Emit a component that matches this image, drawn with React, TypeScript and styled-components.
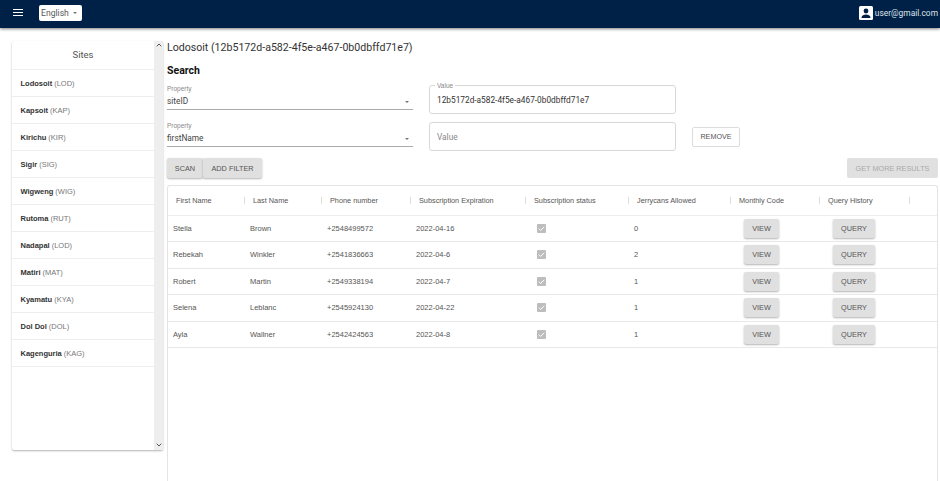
import { styled, createGlobalStyle } from "styled-components";

const GlobalStyle = createGlobalStyle`
  html, body {
    margin: 0;
    height: 100%;
    background: #fff;
    overflow: hidden;
    font-family: Roboto, "Liberation Sans", sans-serif;
  }
  * { box-sizing: border-box; }
`;

const arial = `"Liberation Sans", Arial, sans-serif`;

const Page = styled.div`
  width: 940px;
  height: 481px;
  display: flex;
  flex-direction: column;
  overflow: hidden;
`;

const Header = styled.header`
  height: 28px;
  flex: none;
  background: #002147;
  box-shadow: 0 1px 3px rgba(0, 0, 0, 0.5);
  display: flex;
  align-items: center;
  padding: 0 2px 3px 13px;
  position: relative;
  z-index: 2;
`;

const Menu = styled.svg`
  width: 10px;
  height: 7px;
  margin-right: 16px;
`;

const LangSelect = styled.div`
  width: 43px;
  height: 16px;
  background: #fff;
  border-radius: 2px;
  display: flex;
  align-items: center;
  justify-content: space-between;
  padding: 0 5px 0 2px;
  font-size: 8.6px;
  color: #555;
`;

const Caret = styled.div`
  width: 0;
  height: 0;
  border-left: 2.5px solid transparent;
  border-right: 2.5px solid transparent;
  border-top: 2.5px solid #757575;
`;

const UserBox = styled.div`
  margin-left: auto;
  display: flex;
  align-items: center;
  gap: 2px;
  color: #dfe3e9;
  font-size: 8.4px;
`;

const Avatar = styled.svg`
  width: 14px;
  height: 14px;
`;

const Body = styled.div`
  flex: 1;
  min-height: 0;
  display: flex;
  padding: 13px 2px 0 12px;
  gap: 4px;
`;

const SidebarCard = styled.aside`
  width: 151px;
  height: 409px;
  flex: none;
  display: flex;
  border-radius: 2px;
  box-shadow: 0 1px 2px rgba(0, 0, 0, 0.3);
`;

const SiteList = styled.div`
  flex: 1;
  min-width: 0;
`;

const SitesTitle = styled.div`
  height: 29px;
  padding-bottom: 1px;
  display: flex;
  align-items: center;
  justify-content: center;
  font-size: 9.5px;
  color: #555;
  border-bottom: 1px solid #eee;
`;

const SiteRow = styled.div`
  height: 27px;
  display: flex;
  align-items: center;
  gap: 2px;
  padding-left: 8.5px;
  font-family: ${arial};
  font-size: 7.5px;
  border-bottom: 1px solid #eee;

  b {
    font-weight: 700;
    color: #333;
  }

  span {
    color: #777;
  }
`;

const Scrollbar = styled.div`
  width: 9px;
  background: #eee;
  display: flex;
  flex-direction: column;
  justify-content: space-between;
  align-items: center;
  padding: 2px 0 3px;
`;

const ScrollArrow = styled.svg`
  width: 6px;
  height: 4px;
`;

const Main = styled.main`
  flex: 1;
  min-width: 0;
  display: flex;
  flex-direction: column;
`;

const Title = styled.div`
  font-size: 10.6px;
  line-height: 14px;
  color: #333;
  margin-bottom: 10px;
`;

const SearchHead = styled.div`
  font-size: 10.5px;
  line-height: 12px;
  font-weight: 700;
  color: #111;
  margin-bottom: 8px;
`;

const FilterRow = styled.div`
  display: flex;
  align-items: center;
  margin-bottom: 8px;
  height: 29px;
`;

const PropertyField = styled.div`
  width: 246px;
  height: 25px;
  margin-right: 16px;
  border-bottom: 1px solid #aaa;
  color: #444;
  display: flex;
  flex-direction: column;
  align-self: flex-start;
  position: relative;

  small {
    font-family: ${arial};
    font-size: 6.5px;
    line-height: 8px;
    color: #888;
  }

  span {
    font-size: 8.3px;
    line-height: 13px;
    margin-top: 2px;
  }
`;

const FieldCaret = styled.div`
  position: absolute;
  right: 4px;
  bottom: 6px;
`;

const ValueField = styled.div<{ $empty?: boolean }>`
  width: 247px;
  height: 29px;
  border: 1px solid #d8d8d8;
  border-radius: 3px;
  padding-left: 7px;
  display: flex;
  align-items: center;
  font-size: 8.3px;
  color: ${(p) => (p.$empty ? "#888" : "#333")};
  position: relative;

  small {
    position: absolute;
    top: -4px;
    left: 5px;
    padding: 0 2px;
    background: #fff;
    font-family: ${arial};
    font-size: 6.5px;
    line-height: 7px;
    color: #888;
  }
`;

const RemoveButton = styled.div`
  width: 48px;
  height: 20px;
  margin-left: 16px;
  border: 1px solid #ddd;
  border-radius: 2px;
  display: flex;
  align-items: center;
  justify-content: center;
  font-family: ${arial};
  font-size: 7.2px;
  color: #555;
`;

const Actions = styled.div`
  display: flex;
  height: 20px;
  margin-top: -1px;
  margin-bottom: 7px;
`;

const GreyButton = styled.div<{ $w: number; $disabled?: boolean }>`
  width: ${(p) => p.$w}px;
  height: 20px;
  flex: none;
  background: #e0e0e0;
  border-radius: 2px;
  display: flex;
  align-items: center;
  justify-content: center;
  font-family: ${arial};
  font-size: 7.3px;
  color: ${(p) => (p.$disabled ? "#aaa" : "#555")};
  box-shadow: ${(p) => (p.$disabled ? "none" : "0 1px 2px rgba(0, 0, 0, 0.3)")};
  margin-left: ${(p) => (p.$disabled ? "auto" : "0")};
`;

const TableCard = styled.div`
  flex: 1;
  border: 1px solid #e4e4e4;
  border-bottom: none;
  border-radius: 3px 3px 0 0;
  min-height: 0;
  font-family: ${arial};
`;

const columns = "77px 77px 89px 115px 103px 102px 89px 90px 1fr";

const HeadRow = styled.div`
  display: grid;
  grid-template-columns: ${columns};
  height: 29.5px;
  align-items: center;
  border-bottom: 1px solid #eee;
  font-size: 7.3px;
  color: #555;
`;

const HeadCell = styled.div`
  padding-left: 8px;
  position: relative;

  &::after {
    content: "";
    position: absolute;
    right: 0;
    top: 1px;
    height: 7px;
    width: 1px;
    background: #ddd;
  }

  &:last-child::after {
    display: none;
  }
`;

const Row = styled.div`
  display: grid;
  grid-template-columns: ${columns};
  height: 26.5px;
  align-items: center;
  border-bottom: 1px solid #e8e8e8;
  font-size: 7.5px;
  color: #555;
`;

const Cell = styled.div<{ $pad?: number }>`
  padding-left: ${(p) => p.$pad ?? 5}px;
  display: flex;
`;

const Check = styled.svg`
  width: 9px;
  height: 9px;
  margin-left: 3px;
`;

const RowButton = styled(GreyButton)`
  height: 19px;
`;

const sites = [
  ["Lodosoit", "LOD"],
  ["Kapsoit", "KAP"],
  ["Kirichu", "KIR"],
  ["Sigir", "SIG"],
  ["Wigweng", "WIG"],
  ["Rutoma", "RUT"],
  ["Nadapal", "LOD"],
  ["Matiri", "MAT"],
  ["Kyamatu", "KYA"],
  ["Dol Dol", "DOL"],
  ["Kagenguria", "KAG"],
];

const headers = [
  "First Name",
  "Last Name",
  "Phone number",
  "Subscription Expiration",
  "Subscription status",
  "Jerrycans Allowed",
  "Monthly Code",
  "Query History",
  "",
];

const people = [
  ["Stella", "Brown", "+2548499572", "2022-04-16", "0"],
  ["Rebekah", "Winkler", "+2541836663", "2022-04-6", "2"],
  ["Robert", "Martin", "+2549338194", "2022-04-7", "1"],
  ["Selena", "Leblanc", "+2545924130", "2022-04-22", "1"],
  ["Ayla", "Wallner", "+2542424563", "2022-04-8", "1"],
];

export default function App() {
  return (
    <Page>
      <GlobalStyle />
      <Header>
        <Menu viewBox="0 0 10 7">
          <path d="M0 0h10v1H0zM0 3h10v1H0zM0 6h10v1H0z" fill="#fff" />
        </Menu>
        <LangSelect>
          English
          <Caret />
        </LangSelect>
        <UserBox>
          <Avatar viewBox="0 0 14 14">
            <rect width="14" height="14" rx="1.5" fill="#fff" />
            <circle cx="7" cy="5" r="2.4" fill="#002147" />
            <path d="M2.5 11.5c0-2 2.6-3 4.5-3s4.5 1 4.5 3v.5h-9z" fill="#002147" />
          </Avatar>
          user@gmail.com
        </UserBox>
      </Header>
      <Body>
        <SidebarCard>
          <SiteList>
            <SitesTitle>Sites</SitesTitle>
            {sites.map(([name, code]) => (
              <SiteRow key={name}>
                <b>{name}</b>
                <span>({code})</span>
              </SiteRow>
            ))}
          </SiteList>
          <Scrollbar>
            <ScrollArrow viewBox="0 0 6 4">
              <path d="M.7 3.3 3 1l2.3 2.3" fill="none" stroke="#555" strokeWidth="1" />
            </ScrollArrow>
            <ScrollArrow viewBox="0 0 6 4">
              <path d="M.7.7 3 3 5.3.7" fill="none" stroke="#555" strokeWidth="1" />
            </ScrollArrow>
          </Scrollbar>
        </SidebarCard>
        <Main>
          <Title>Lodosoit (12b5172d-a582-4f5e-a467-0b0dbffd71e7)</Title>
          <SearchHead>Search</SearchHead>
          <FilterRow>
            <PropertyField>
              <small>Property</small>
              <span>siteID</span>
              <FieldCaret>
                <Caret />
              </FieldCaret>
            </PropertyField>
            <ValueField>
              <small>Value</small>
              12b5172d-a582-4f5e-a467-0b0dbffd71e7
            </ValueField>
          </FilterRow>
          <FilterRow>
            <PropertyField>
              <small>Property</small>
              <span>firstName</span>
              <FieldCaret>
                <Caret />
              </FieldCaret>
            </PropertyField>
            <ValueField $empty>Value</ValueField>
            <RemoveButton>REMOVE</RemoveButton>
          </FilterRow>
          <Actions>
            <GreyButton $w={36}>SCAN</GreyButton>
            <GreyButton $w={59}>ADD FILTER</GreyButton>
            <GreyButton $w={91} $disabled>
              GET MORE RESULTS
            </GreyButton>
          </Actions>
          <TableCard>
            <HeadRow>
              {headers.map((h) => (
                <HeadCell key={h}>{h}</HeadCell>
              ))}
            </HeadRow>
            {people.map((p) => (
              <Row key={p[0]}>
                <Cell>{p[0]}</Cell>
                <Cell>{p[1]}</Cell>
                <Cell>{p[2]}</Cell>
                <Cell>{p[3]}</Cell>
                <Cell $pad={8}>
                  <Check viewBox="0 0 9 9">
                    <rect width="9" height="9" rx="1" fill="#bdbdbd" />
                    <path d="M1.8 4.6 3.6 6.4 7.3 2.8" fill="none" stroke="#fff" strokeWidth="1" />
                  </Check>
                </Cell>
                <Cell>{p[4]}</Cell>
                <Cell $pad={13}>
                  <RowButton $w={35}>VIEW</RowButton>
                </Cell>
                <Cell $pad={13}>
                  <RowButton $w={42}>QUERY</RowButton>
                </Cell>
                <Cell />
              </Row>
            ))}
          </TableCard>
        </Main>
      </Body>
    </Page>
  );
}
